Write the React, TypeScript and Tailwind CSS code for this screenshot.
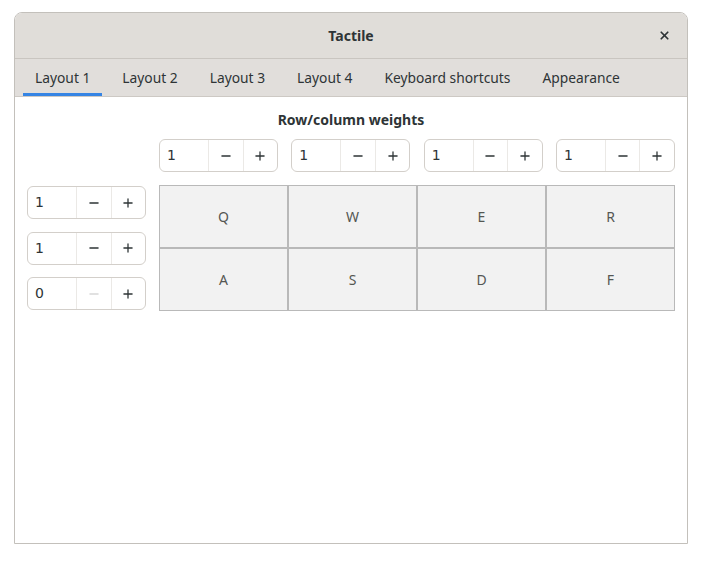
import { Minus, Plus, X } from "lucide-react";

const font = { fontFamily: '"Noto Sans", "Open Sans", sans-serif' };

const SpinButton = ({ value, minDisabled = false }: { value: number; minDisabled?: boolean }) => {
  return (
    <div className="flex h-[33px] w-[119px] rounded-[6px] border border-[#d3cfca] bg-white">
      <div
        className="flex w-[48px] items-center pl-[7px] text-[14px] text-[#2e3436]"
        style={{ fontFamily: '"DejaVu Sans", sans-serif' }}
      >
        {value}
      </div>
      <div className="flex flex-1 items-center justify-center border-l border-[#ebe9e6]">
        <Minus size={14} strokeWidth={2.2} className={minDisabled ? "text-[#d8d8d8]" : "text-[#2e3436]"} />
      </div>
      <div className="flex flex-1 items-center justify-center border-l border-[#ebe9e6]">
        <Plus size={14} strokeWidth={2.2} className="text-[#2e3436]" />
      </div>
    </div>
  );
};

const tabs = ["Layout 1", "Layout 2", "Layout 3", "Layout 4", "Keyboard shortcuts", "Appearance"];
const keys = ["Q", "W", "E", "R", "A", "S", "D", "F"];

export default function App() {
  return (
    <div className="h-[561px] w-[702px] bg-white pl-[14px] pt-[12px]" style={font}>
      <div className="flex h-[532px] w-[674px] flex-col overflow-hidden rounded-t-[8px] border border-[#c3c0bb] bg-white">
        {/* Header bar */}
        <div className="relative flex h-[46px] shrink-0 items-center justify-center border-b border-[#c9c5c0] bg-[#e0ddd9]">
          <span className="text-[14px] font-bold text-[#2e3436]">Tactile</span>
          <X size={13} strokeWidth={3.2} className="absolute right-[16px] top-[16px] text-[#2e3436]" />
        </div>

        {/* Tabs */}
        <div className="flex h-[38px] shrink-0 gap-[8px] border-b border-[#cdc9c4] bg-[#e1dedb] pl-[8px]">
          {tabs.map((t, i) => (
            <div
              key={t}
              className={`flex items-center border-b-[3px] px-[12px] pt-[4px] text-[13.8px] text-[#2e3436] ${
                i === 0 ? "border-[#3584e4]" : "border-transparent"
              }`}
            >
              {t}
            </div>
          ))}
        </div>

        {/* Content */}
        <div className="flex flex-col px-[12px] pt-[12px]">
          <div className="text-center text-[14px] font-bold text-[#2e3436]">Row/column weights</div>
          <div className="mt-[9px] grid grid-cols-[119px_1fr] grid-rows-[33px_auto] gap-[13px]">
            <div />
            <div className="flex justify-between">
              <SpinButton value={1} />
              <SpinButton value={1} />
              <SpinButton value={1} />
              <SpinButton value={1} />
            </div>
            <div className="flex flex-col justify-between py-[1px]">
              <SpinButton value={1} />
              <SpinButton value={1} />
              <SpinButton value={0} minDisabled />
            </div>
            <div className="grid grid-cols-4">
              {keys.map((k) => (
                <div
                  key={k}
                  className="flex h-[63px] items-center justify-center border border-[#b9b9b9] bg-[#f2f2f2] text-[14px] text-[#555753]"
                >
                  {k}
                </div>
              ))}
            </div>
          </div>
        </div>
      </div>
    </div>
  );
}
